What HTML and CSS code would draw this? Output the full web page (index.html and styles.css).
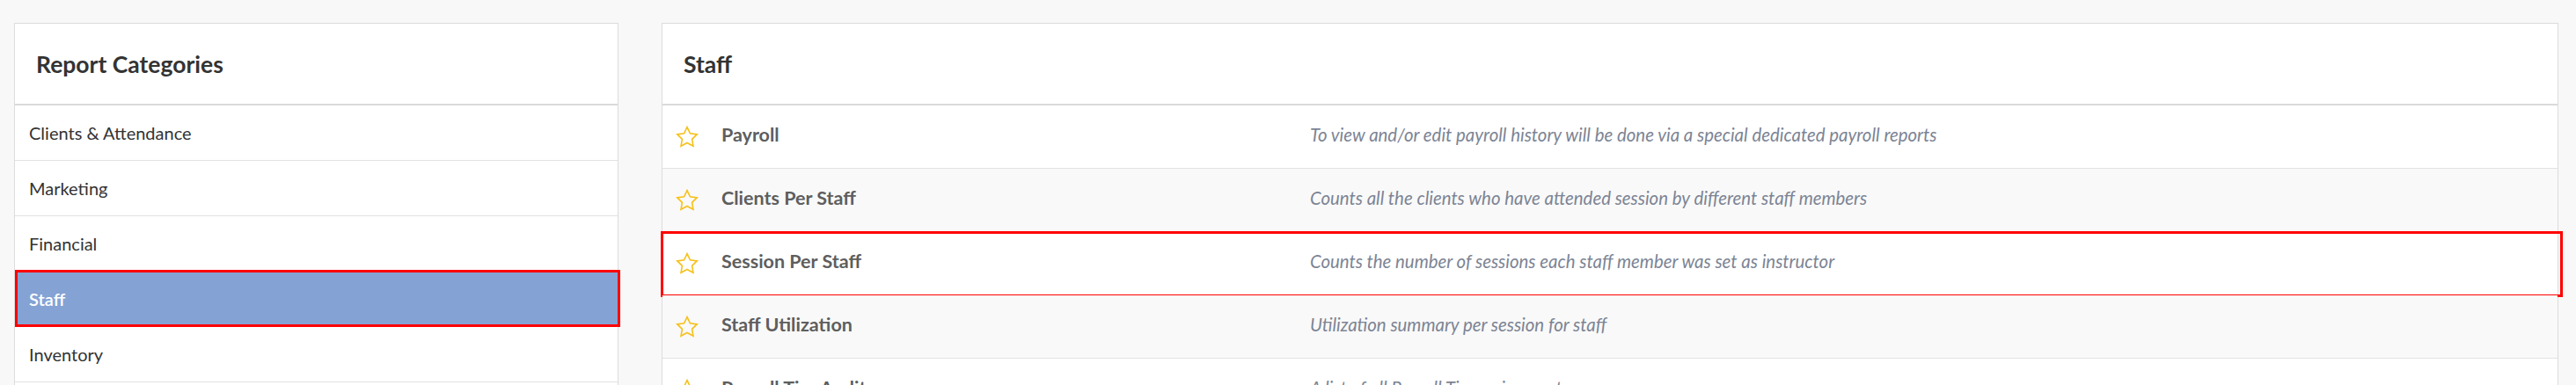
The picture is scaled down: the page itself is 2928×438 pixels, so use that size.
FILE: index.html
```html
<!DOCTYPE html>
<html lang="en">
<head>
<meta charset="utf-8">
<title>Reports</title>
<link rel="stylesheet" href="styles.css">
</head>
<body>
<div class="layout">
  <section class="panel">
    <header class="panel-head"><h2>Report Categories</h2></header>
    <ul class="cat-list">
      <li class="cat">Clients &amp; Attendance</li>
      <li class="cat">Marketing</li>
      <li class="cat">Financial</li>
      <li class="cat cat-active">Staff</li>
      <li class="cat">Inventory</li>
      <li class="cat">Other</li>
    </ul>
  </section>
  <section class="panel">
    <header class="panel-head panel-head-right"><h2>Staff</h2></header>
    <div class="reports">
      <div class="report">
        <span class="star"><svg viewBox="0 0 24 24" width="28" height="28"><polygon points="12,2.2 14.95,8.4 21.6,9.3 16.8,14 17.95,20.7 12,17.5 6.05,20.7 7.2,14 2.4,9.3 9.05,8.4"/></svg></span>
        <span class="report-name">Payroll</span>
        <span class="report-desc">To view and/or edit payroll history will be done via a special dedicated payroll reports</span>
      </div>
      <div class="report report-alt">
        <span class="star"><svg viewBox="0 0 24 24" width="28" height="28"><polygon points="12,2.2 14.95,8.4 21.6,9.3 16.8,14 17.95,20.7 12,17.5 6.05,20.7 7.2,14 2.4,9.3 9.05,8.4"/></svg></span>
        <span class="report-name">Clients Per Staff</span>
        <span class="report-desc">Counts all the clients who have attended session by different staff members</span>
      </div>
      <div class="report report-marked">
        <span class="star"><svg viewBox="0 0 24 24" width="28" height="28"><polygon points="12,2.2 14.95,8.4 21.6,9.3 16.8,14 17.95,20.7 12,17.5 6.05,20.7 7.2,14 2.4,9.3 9.05,8.4"/></svg></span>
        <span class="report-name">Session Per Staff</span>
        <span class="report-desc">Counts the number of sessions each staff member was set as instructor</span>
      </div>
      <div class="report report-alt">
        <span class="star"><svg viewBox="0 0 24 24" width="28" height="28"><polygon points="12,2.2 14.95,8.4 21.6,9.3 16.8,14 17.95,20.7 12,17.5 6.05,20.7 7.2,14 2.4,9.3 9.05,8.4"/></svg></span>
        <span class="report-name">Staff Utilization</span>
        <span class="report-desc">Utilization summary per session for staff</span>
      </div>
      <div class="report">
        <span class="star"><svg viewBox="0 0 24 24" width="28" height="28"><polygon points="12,2.2 14.95,8.4 21.6,9.3 16.8,14 17.95,20.7 12,17.5 6.05,20.7 7.2,14 2.4,9.3 9.05,8.4"/></svg></span>
        <span class="report-name">Payroll Tier Audit</span>
        <span class="report-desc">A list of all Payroll Tier assignments</span>
      </div>
    </div>
  </section>
</div>
</body>
</html>
```

FILE: styles.css
```css
* { box-sizing: border-box; }

html, body {
  margin: 0;
  padding: 0;
  background: #f8f8f8;
  font-family: Lato, "Open Sans", sans-serif;
  overflow: hidden;
}

.layout {
  display: grid;
  grid-template-columns: 687px 2156px;
  column-gap: 49px;
  align-items: start;
  padding: 26px 0 0 16px;
}

.panel {
  background: #fff;
  border: 1px solid #dcdcdc;
}

.panel-head {
  height: 93px;
  display: flex;
  align-items: center;
  padding-left: 24px;
  border-bottom: 2px solid #dadada;
}

.panel-head h2 {
  margin: 0;
  font-size: 26.5px;
  font-weight: 700;
  color: #333;
}

.cat-list {
  list-style: none;
  margin: 0;
  padding: 0;
}

.cat {
  position: relative;
  height: 63px;
  display: flex;
  align-items: center;
  padding-left: 16px;
  font-size: 20px;
  color: #333;
  border-bottom: 1px solid #e2e2e2;
}

.cat-active {
  background: #84a2d4;
  color: #fff;
  font-weight: 600;
}

.cat-active::after {
  content: "";
  position: absolute;
  left: 0;
  right: -3px;
  top: -2px;
  bottom: -1px;
  border: 3px solid #f00;
}

.report {
  position: relative;
  height: 72px;
  display: grid;
  grid-template-columns: 51px 669px 1fr;
  align-items: center;
  padding-left: 16px;
  border-bottom: 1px solid #e2e2e2;
  background: #fff;
}

.report-alt {
  background: #f9f9f9;
}

.report-marked::after {
  content: "";
  position: absolute;
  left: -2px;
  right: -6px;
  top: -1px;
  bottom: -3px;
  border: 3px solid #f00;
}

.star {
  display: flex;
  align-items: center;
  margin-left: -2px;
}

.star svg {
  fill: none;
  stroke: #f6c11b;
  stroke-width: 1.4;
  stroke-linejoin: miter;
}

.report-name {
  font-size: 21.5px;
  font-weight: 700;
  color: #5e5e5e;
  margin-bottom: 6px;
}

.report-desc {
  font-size: 20.4px;
  font-style: italic;
  color: #7c8494;
  margin-bottom: 6px;
}
```
